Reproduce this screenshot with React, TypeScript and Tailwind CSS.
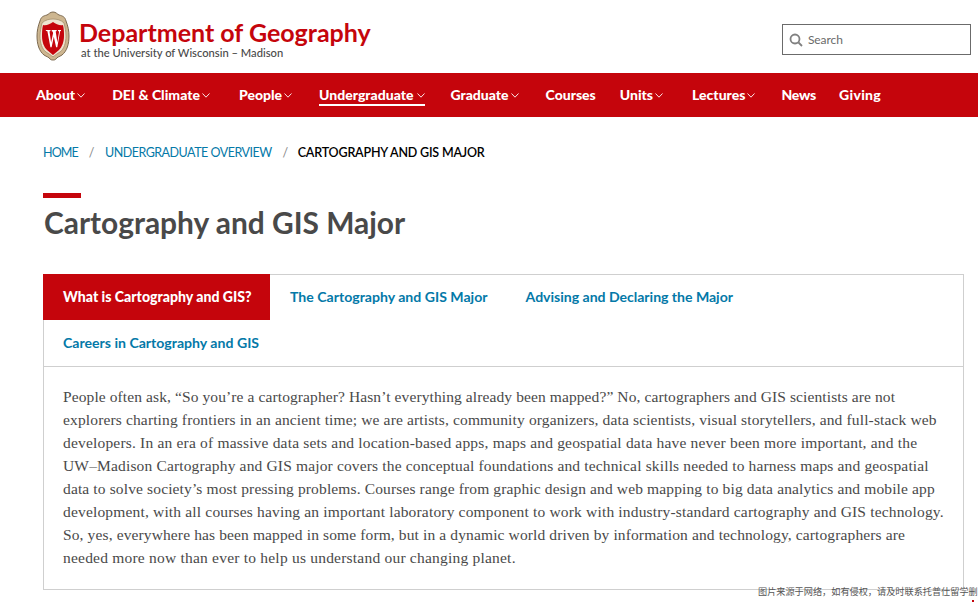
import React from "react";

const navItems: { label: string; chevron: boolean; gap: string }[] = [
  { label: "About", chevron: true, gap: "mr-[27px]" },
  { label: "DEI & Climate", chevron: true, gap: "mr-[29px]" },
  { label: "People", chevron: true, gap: "mr-[27px]" },
  { label: "Undergraduate", chevron: true, gap: "mr-[25px]" },
  { label: "Graduate", chevron: true, gap: "mr-[27px]" },
  { label: "Courses", chevron: false, gap: "mr-[24px]" },
  { label: "Units", chevron: true, gap: "mr-[29px]" },
  { label: "Lectures", chevron: true, gap: "mr-[26px]" },
  { label: "News", chevron: false, gap: "mr-[23px] tracking-[-0.2px]" },
  { label: "Giving", chevron: false, gap: "mr-[0px] tracking-[0.3px]" },
];

const lines: [string, string][] = [
  ["People often ask, “So you’re a cartographer? Hasn’t everything already been mapped?” No, cartographers and GIS scientists are not", "tracking-[0.10px]"],
  ["explorers charting frontiers in an ancient time; we are artists, community organizers, data scientists, visual storytellers, and full-stack web", "tracking-[0.14px]"],
  ["developers. In an era of massive data sets and location-based apps, maps and geospatial data have never been more important, and the", "tracking-[0.185px]"],
  ["UW–Madison Cartography and GIS major covers the conceptual foundations and technical skills needed to harness maps and geospatial", "tracking-[0.155px]"],
  ["data to solve society’s most pressing problems. Courses range from graphic design and web mapping to big data analytics and mobile app", "tracking-[0.133px]"],
  ["development, with all courses having an important laboratory component to work with industry-standard cartography and GIS technology.", "tracking-[0.17px]"],
  ["So, yes, everywhere has been mapped in some form, but in a dynamic world driven by information and technology, cartographers are", "tracking-[0.123px]"],
  ["needed more now than ever to help us understand our changing planet.", "tracking-[0.214px]"],
];

function Crest() {
  return (
    <svg width="34" height="50" viewBox="0 0 34 50" className="shrink-0">
      <path d="M17 1c3 0 4 2 6 3 4 1 6 2 7 6 2 5 3 10 3 15 0 8-2 15-7 19-3 2-5 2-6 4-1 1-2 1-3 1s-2 0-3-1c-1-2-3-2-6-4C3 40 1 33 1 25c0-5 1-10 3-15 1-4 3-5 7-6 2-1 3-3 6-3z" fill="#cdb690" stroke="#7d6a50" strokeWidth="1" />
      <path d="M6 12c3-3 7-4 11-4s8 1 11 4c1 4 2 9 2 13 0 7-2 13-6 16-3 2-5 3-7 5-2-2-4-3-7-5-4-3-6-9-6-16 0-4 1-9 2-13z" fill="#efe4d0" stroke="#a58f6d" strokeWidth="0.8" />
      <path d="M7 14c3 1 7-1 10-3 3 2 7 4 10 3 1 4 1 8 1 11 0 6-2 11-5 14-2 2-4 3-6 5-2-2-4-3-6-5-3-3-5-8-5-14 0-3 0-7 1-11z" fill="#c5050c" />
      <path d="M9.500 19h5v1l-1 .4 1.600 11 2-9.500-.6-1.500-.8-.1V19h5v1l-1 .4 1.700 11 1.700-11-1.100-.4V19h3v1l-.9.300-2.800 16h-1.200l-2.300-10.600-2.200 10.600h-1.200l-3-16-1-.3z" fill="#fff" />
    </svg>
  );
}

export default function App() {
  return (
    <div className="relative h-[602px] w-[978px] overflow-hidden bg-white font-['Lato',sans-serif]">
      <header className="flex h-[73px] items-start justify-between pl-[36px] pr-[7px]">
        <div className="flex items-start gap-[9px] pt-[11px]">
          <Crest />
          <div>
            <div className="mt-[6px] text-[25px] leading-[30px] font-bold whitespace-nowrap text-[#c5050c]">Department of Geography</div>
            <div className="ml-[2px] -mt-[1px] text-[11.200px] leading-[14px] font-medium whitespace-nowrap text-[#494949]">at the University of Wisconsin – Madison</div>
          </div>
        </div>
        <div className="mt-[24px] flex h-[31px] w-[189px] items-center gap-[5px] border-[1.500px] border-[#6b6b6b] border-solid pl-[6px] text-[12px] text-[#6a6a6a]">
          <svg width="14" height="14" viewBox="0 0 14 14" fill="none" stroke="#808080" strokeWidth="1.800">
            <circle cx="6" cy="6" r="4.500" />
            <path d="M9.500 9.500 13 13" />
          </svg>
          <span className="tracking-[-0.1px]">Search</span>
        </div>
      </header>

      <nav className="flex h-[44px] bg-[#c5050c] pl-[36px] text-[14px] font-black text-white">
        {navItems.map(({ label, chevron, gap }) => (
          <div key={label} className={`mt-[12px] h-[21px] ${gap} flex items-start leading-[19px] ${label === "Undergraduate" ? "border-b-2 border-white" : ""}`}>
            <span>{label}</span>
            {chevron && (
              <svg width="8" height="5" viewBox="0 0 8 5" fill="none" stroke="#fff" strokeWidth="0.900" className={`mt-[8px] ${label === "Undergraduate" ? "ml-[4px]" : "ml-[2px]"}`}>
                <path d="M.5.500 4 4.200 7.500.5" />
              </svg>
            )}
          </div>
        ))}
      </nav>

      <main className="px-[43px]">
        <div className="flex items-center pt-[27px] text-[12.500px] leading-[17px] tracking-[-0.5px]">
          <span className="tracking-[-0.9px] text-[#0479a8]">HOME</span>
          <span className="mx-[11px] text-[#888]">/</span>
          <span className="text-[#0479a8]">UNDERGRADUATE OVERVIEW</span>
          <span className="mr-[10px] ml-[11px] text-[#888]">/</span>
          <span className="font-semibold tracking-[-0.2px] text-black">CARTOGRAPHY AND GIS MAJOR</span>
        </div>
        <div className="mt-[32px] h-[5px] w-[38px] bg-[#c5050c]" />
        <h1 className="mt-[6px] ml-px text-[29.900px] leading-[36px] font-bold text-[#494949]">Cartography and GIS Major</h1>

        <section className="mt-[34px] w-[921px] border border-[#cfcfcf]">
          <div className="flex h-[45px] items-center pb-px text-[14.100px] font-bold text-[#0479a8]">
            <div className="-mt-px -ml-px flex h-[46px] w-[227px] items-center self-start bg-[#c5050c] pl-[20px] font-black text-white">What is Cartography and GIS?</div>
            <div className="ml-[20px]">The Cartography and GIS Major</div>
            <div className="ml-[38px] tracking-[-0.03px]">Advising and Declaring the Major</div>
          </div>
          <div className="flex h-[47px] items-center border-b border-[#cfcfcf] pl-[19px] text-[14.100px] font-bold text-[#0479a8]">Careers in Cartography and GIS</div>
          <div className="px-[19px] pt-[18px] pb-[20px] font-['Liberation_Serif',serif] text-[15.500px] leading-[23px] whitespace-nowrap text-[#494949]">
            {lines.map(([text, spacing]) => (
              <div key={text} className={spacing}>{text}</div>
            ))}
          </div>
        </section>
      </main>

      <div className="absolute right-0 bottom-[4px] w-[220px] text-[9.170px] leading-[14px] whitespace-nowrap text-[#555] font-['Noto_Sans_CJK_SC',sans-serif]">
        图片来源于网络，如有侵权，请及时联系托普仕留学删
      </div>
      <div className="absolute right-[4px] bottom-0 h-[2px] w-[2px] bg-[#c5050c]" />
    </div>
  );
}
